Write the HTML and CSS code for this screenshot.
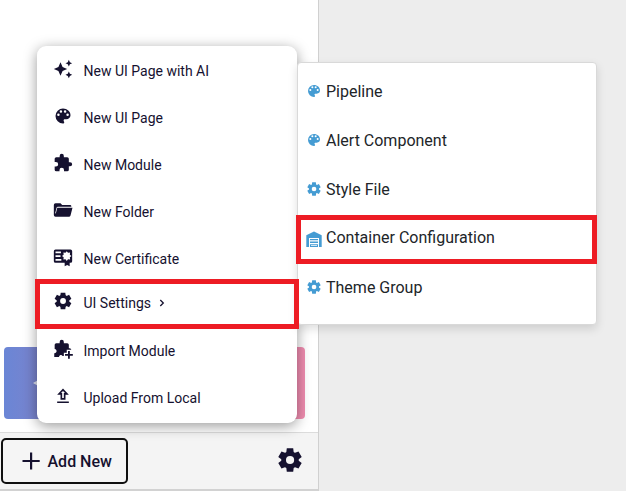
FILE: index.html
```html
<!DOCTYPE html>
<html lang="en">
<head>
<meta charset="utf-8">
<title>Add New</title>
<link rel="stylesheet" href="styles.css">
</head>
<body>
<svg class="defs" width="0" height="0">
  <symbol id="palette" viewBox="0 0 24 24"><path d="M12 3a9 9 0 0 0 0 18c.83 0 1.5-.67 1.5-1.5 0-.39-.15-.74-.39-1.01-.23-.26-.38-.61-.38-.99 0-.83.67-1.5 1.5-1.5H16a5 5 0 0 0 5-5c0-4.42-4.03-8-9-8zm-5.5 9a1.5 1.5 0 1 1 0-3 1.5 1.5 0 0 1 0 3zm3-4a1.5 1.5 0 1 1 0-3 1.5 1.5 0 0 1 0 3zm5 0a1.5 1.5 0 1 1 0-3 1.5 1.5 0 0 1 0 3zm3 4a1.5 1.5 0 1 1 0-3 1.5 1.5 0 0 1 0 3z"/></symbol>
  <symbol id="gear" viewBox="0 0 24 24"><path fill-rule="evenodd" d="M9.25 22 8.85 18.8a5 5 0 0 1-.61-.3 8 8 0 0 1-.57-.37L4.7 19.38l-2.75-4.75 2.58-1.95a2.4 2.4 0 0 1-.03-.34v-.67c0-.12.01-.23.03-.35L1.95 9.38 4.7 4.63l2.98 1.25c.18-.14.37-.26.57-.38.2-.12.4-.22.6-.3L9.25 2h5.5l.4 3.2c.22.08.42.18.61.3.2.12.39.24.57.38l2.97-1.25 2.75 4.75-2.57 1.94c.02.12.02.23.02.35v.67c0 .11-.02.23-.05.34l2.58 1.95-2.75 4.75-2.95-1.25c-.18.14-.38.26-.58.37-.2.12-.4.22-.6.3l-.4 3.2zM12.05 15.5a3.5 3.5 0 1 0 0-7 3.5 3.5 0 0 0 0 7z"/></symbol>
  <symbol id="puzzle" viewBox="0 0 24 24"><path d="M20.5 11H19V7a2 2 0 0 0-2-2h-4V3.5a2.5 2.5 0 0 0-5 0V5H4a2 2 0 0 0-2 2v3.8h1.5a2.7 2.7 0 0 1 0 5.4H2V20a2 2 0 0 0 2 2h3.8v-1.5a2.7 2.7 0 0 1 5.4 0V22H17a2 2 0 0 0 2-2v-4h1.5a2.5 2.5 0 0 0 0-5z"/></symbol>
</svg>

<div class="app">
  <aside class="sidebar">
    <div class="cards">
      <div class="card card-blue"><svg viewBox="0 0 12 12"><path d="M0 6 8 1.500v9z"/></svg></div>
      <div class="card card-pink"></div>
    </div>
    <footer class="footer">
      <button class="add"><svg viewBox="0 0 28 28"><path d="M13 5.500h2.200v7.400h7.500v2.200h-7.500v7.400H13v-7.400H5.500v-2.200H13z"/></svg><span>Add New</span></button>
      <svg class="cog"><use href="#gear"/></svg>
    </footer>
  </aside>
  <main class="canvas"></main>
</div>

<nav class="menu">
  <div class="item"><svg viewBox="0 0 24 24"><path d="m19 9 1.250-2.750L23 5l-2.750-1.250L19 1l-1.250 2.750L15 5l2.750 1.250zm-7.500.5L9 4 6.500 9.500 1 12l5.500 2.500L9 20l2.500-5.500L17 12zM19 15l-1.250 2.750L15 19l2.750 1.250L19 23l1.250-2.750L23 19l-2.750-1.250z"/></svg><span>New UI Page with AI</span></div>
  <div class="item"><svg><use href="#palette"/></svg><span>New UI Page</span></div>
  <div class="item"><svg><use href="#puzzle"/></svg><span>New Module</span></div>
  <div class="item"><svg viewBox="0 0 24 24"><path d="M3 20a2 2 0 0 1-2-2V6a2 2 0 0 1 2-2h6l2 2h9.500A1.500 1.500 0 0 1 22 7.500V8H5.800a1.500 1.500 0 0 0-1.450 1.100L2.600 16l.8.200L5.100 9.200H23.400L21 18.500A2 2 0 0 1 19.100 20z"/></svg><span>New Folder</span></div>
  <div class="item"><svg viewBox="0 0 24 24"><path fill-rule="evenodd" d="M3 3h18a2 2 0 0 1 2 2v12a2 2 0 0 1-2 2h-1v4l-3-1.500L14 23v-4H3a2 2 0 0 1-2-2V5a2 2 0 0 1 2-2zm0 2.500V7.500h6.500V5.500zM3 10v2h6v-2zm0 4.500v2h7v-2zM16.500 5l-1.500 2-2.500-.3.300 2.500-2 1.600 2 1.600-.3 2.500 2.500-.3 1.500 2.100 1.500-2.100 2.500.3-.3-2.500 2-1.600-2-1.600.3-2.500-2.500.3z"/></svg><span>New Certificate</span></div>
  <div class="item settings"><svg><use href="#gear"/></svg><span>UI Settings</span><svg class="chevron" viewBox="0 0 6 8"><path d="m1.300 1 3 3-3 3"/></svg></div>
  <div class="item"><svg viewBox="0 0 24 24"><path d="M1.500 21.500v-4.500c3.500.3 3.800-4.500.5-5V7a2 2 0 0 1 2-2h4V3.500a2.500 2.500 0 0 1 5 0V5h4a2 2 0 0 1 2 2v4h1A2.300 2.300 0 0 1 22 13h-5.500v3.500H13V20.500h-1.500c-1-2-3.800-1.500-4.300 1zM18 14.500h2.200V18h3.600v2.200h-3.600v3.600H18v-3.600h-3.600V18H18z"/></svg><span>Import Module</span></div>
  <div class="item"><svg viewBox="0 0 24 24"><path fill-rule="evenodd" d="M5 20.500h14v-2H5zm0-10h4v6h6v-6h4l-7-7.500zm8-2v6h-2v-6H9.600L12 5.900l2.400 2.600z"/></svg><span>Upload From Local</span></div>
</nav>

<nav class="submenu">
  <div class="sub"><svg><use href="#palette"/></svg><span>Pipeline</span></div>
  <div class="sub"><svg><use href="#palette"/></svg><span>Alert Component</span></div>
  <div class="sub"><svg><use href="#gear"/></svg><span>Style File</span></div>
  <div class="sub container"><svg viewBox="0 0 16 16"><path d="M.3 16V4.300L8 .5l7.700 3.800V16H13V7H3v9zM4 8h8v1.300H4zm0 2.600h8v1.300H4zm0 2.700h8V16H4zm1 1v.7h6v-.7z"/></svg><span>Container Configuration</span></div>
  <div class="sub"><svg><use href="#gear"/></svg><span>Theme Group</span></div>
</nav>

<div class="mark mark-settings"></div>
<div class="mark mark-container"></div>
</body>
</html>
```

FILE: styles.css
```css
* { box-sizing: border-box; }
body { margin: 0; width: 626px; height: 491px; overflow: hidden; font-family: Roboto, "Liberation Sans", sans-serif; color: #15112f; }
svg { display: block; fill: currentColor; flex: none; }
.defs { position: absolute; }
.app { display: flex; height: 491px; background: #ededed; }
.sidebar { width: 319px; display: flex; flex-direction: column; justify-content: flex-end; background: #fff; border-right: 1px solid #d0d0d0; }
.canvas { flex: 1; }
.cards { display: flex; justify-content: space-between; padding: 0 13px 13px 4px; }
.card { width: 140px; height: 72px; border-radius: 4px; display: flex; align-items: center; }
.card-blue { background: linear-gradient(90deg, #6a86d6, #7a83cc 35px, #8a7fc0); padding-left: 29px; color: #dfe3f2; }
.card-blue svg { width: 12px; height: 12px; }
.card-pink { background: #f08db0; }
.footer { height: 59px; display: flex; align-items: center; justify-content: space-between; padding: 0 14px 1px 1px; background: #f4f4f4; border-top: 1px solid #dcdcdc; border-bottom: 2px solid #d2d2d2; }
.add { width: 127px; height: 46px; display: flex; align-items: center; gap: 2.500px; padding: 0 0 0 14px; border: 2px solid #101010; border-radius: 5px; background: #f5f5f5; color: #15112f; font: 500 16px/20px Roboto, sans-serif; }
.add svg { width: 28px; height: 28px; }
.add span { padding-top: 2px; }
.cog { width: 28px; height: 28px; margin-bottom: 1px; }

.menu { position: absolute; left: 37px; top: 46px; width: 260px; height: 377px; padding: 1px 16px; border-radius: 9px; background: #fff; box-shadow: 0 3px 14px rgba(0, 0, 0, .4); }
.item { height: 47px; display: flex; align-items: center; font-size: 14px; line-height: 20px; }
.item svg { width: 20px; height: 20px; margin: -4px 10.500px 0 0; }
.item.settings { height: 44px; padding-bottom: 2px; margin-bottom: 1px; }
.item.settings svg { margin-top: -5px; }
.item.settings .chevron { width: 6px; height: 8px; margin: 0 0 0 8px; fill: none; stroke: currentColor; stroke-width: 1.3; }

.submenu { position: absolute; left: 297px; top: 62px; width: 300px; height: 263px; padding: 4px 8px; border: 1px solid #d9d9d9; border-radius: 4px; background: #fff; box-shadow: 0 4px 10px rgba(0, 0, 0, .13); color: #212529; }
.sub { height: 49px; display: flex; align-items: center; gap: 4px; font-size: 16px; line-height: 24px; }
.sub svg { width: 16px; height: 16px; margin-top: -1px; color: #459cd3; }
.container { padding-bottom: 1px; }
.container svg { margin-top: 1px; }

.mark { position: absolute; border: 5px solid #ed1c24; }
.mark-settings { left: 35px; top: 279px; width: 264px; height: 50px; }
.mark-container { left: 296px; top: 215px; width: 301px; height: 49px; }
```
